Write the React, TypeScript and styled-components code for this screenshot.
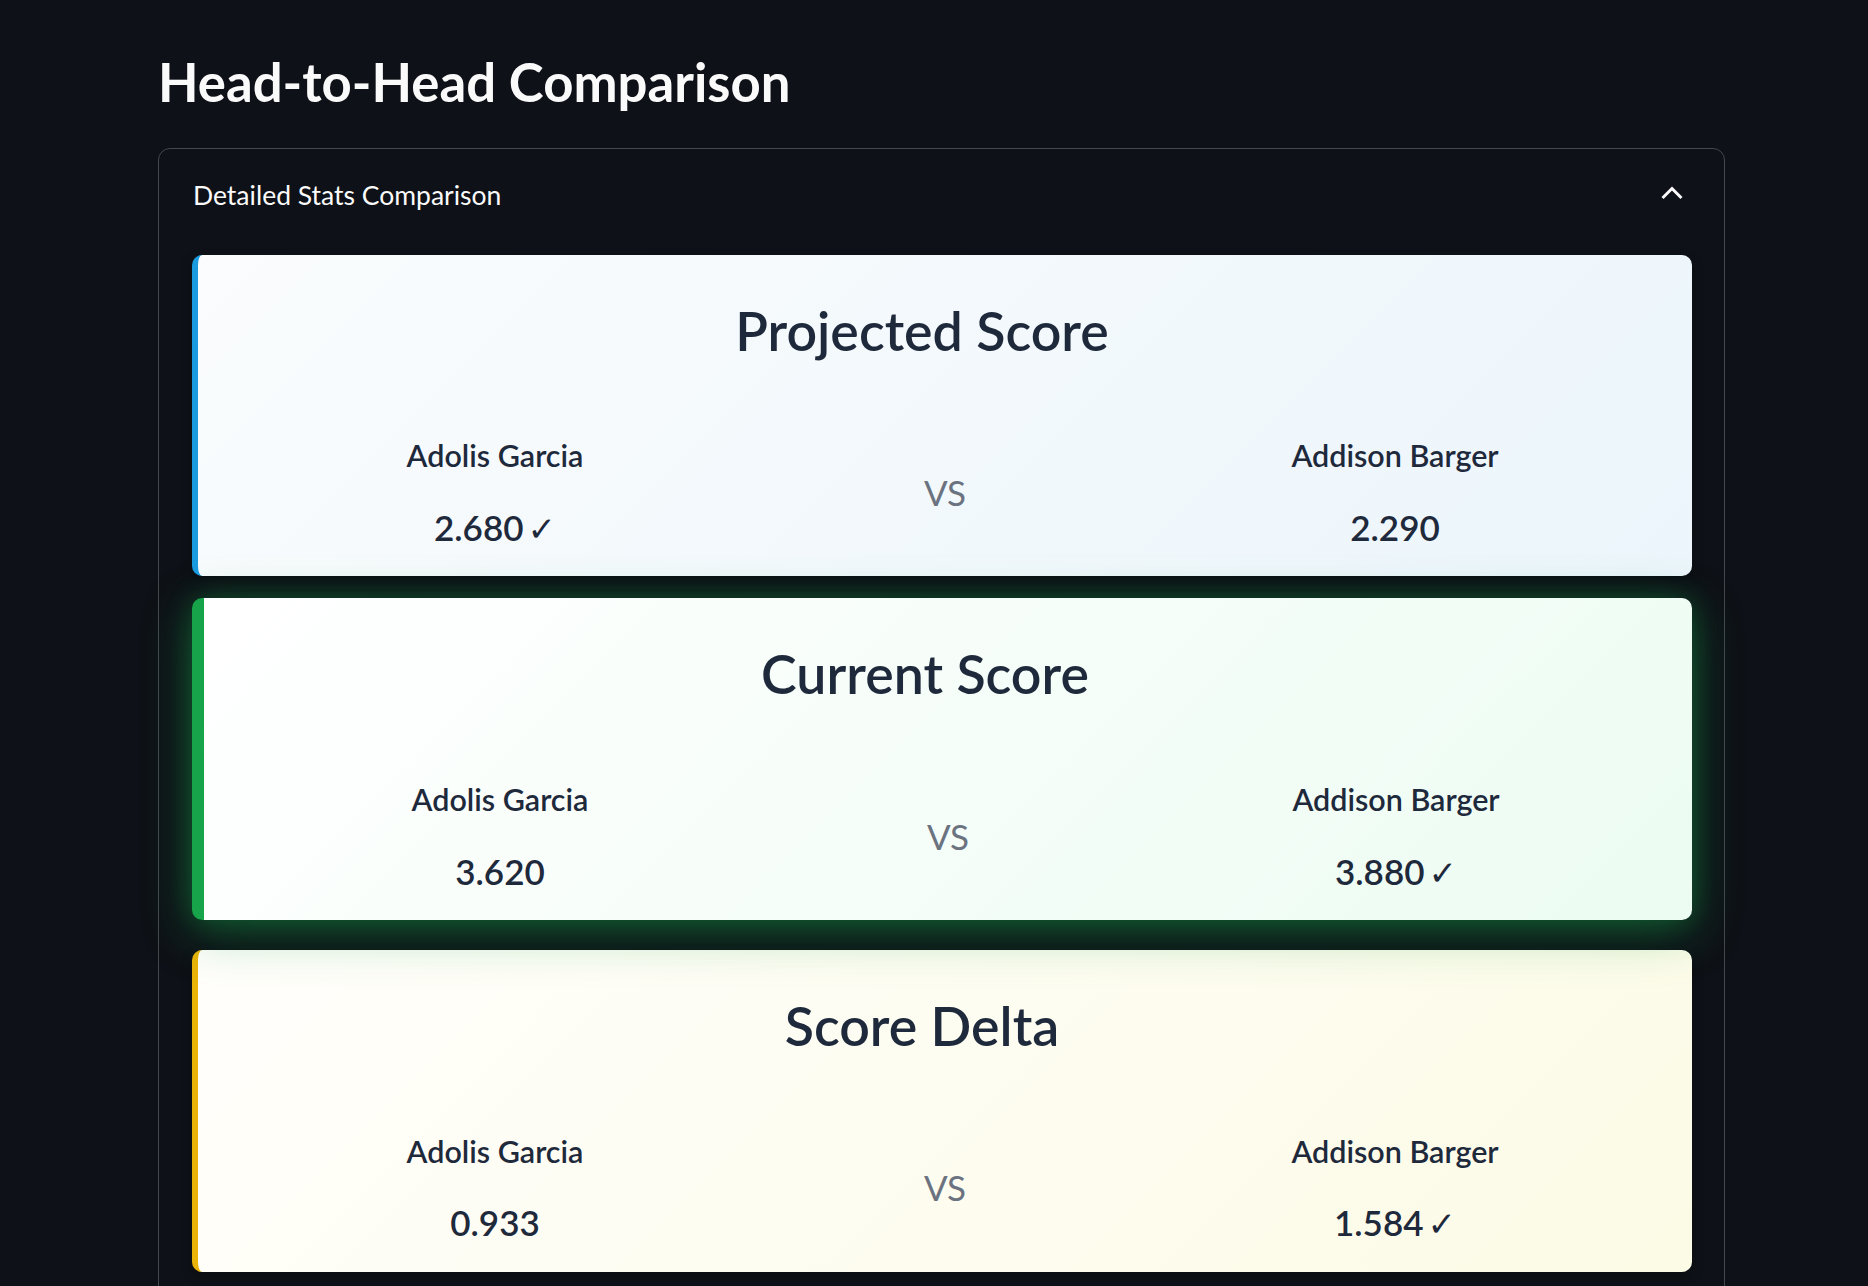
import React from "react";
import styled, { createGlobalStyle, css } from "styled-components";

const GlobalStyle = createGlobalStyle`
  html, body {
    margin: 0;
    padding: 0;
    background: #0e1117;
  }
  body {
    font-family: Lato, "Noto Sans", sans-serif;
    color: #fafafa;
    overflow: hidden;
  }
  * { box-sizing: border-box; }
`;

const Page = styled.main`
  min-height: 1286px;
  padding: 0 143px 0 158px;
`;

const Heading = styled.h2`
  margin: 0;
  padding: 50px 0 0;
  font-size: 52.7px;
  line-height: 1.2;
  font-weight: 700;
  color: #fafafa;
`;

const Expander = styled.section`
  margin-top: 34.5px;
  width: 1567px;
  border: 1px solid #44474d;
  border-radius: 12px;
`;

const Summary = styled.div`
  height: 92px;
  padding: 0 40px 0 34px;
  display: flex;
  align-items: center;
  justify-content: space-between;
  font-size: 26.5px;
  font-weight: 400;
  color: #fafafa;
`;

const Chevron = styled.svg`
  width: 24px;
  height: 16px;
  display: block;
  margin-top: -3px;
`;

const Body = styled.div`
  padding: 14px 32px 32px 33px;
  display: flex;
  flex-direction: column;
  gap: 26px;
`;

type Tone = "blue" | "green" | "yellow";

const tones: Record<Tone, { edge: string; bg: string; width: number }> = {
  blue: { edge: "#1a9be0", bg: "linear-gradient(135deg, #fafcfd 0%, #ebf5fb 100%)", width: 6 },
  green: { edge: "#16a34a", bg: "linear-gradient(135deg, #ffffff 0%, #ecfcf2 100%)", width: 12 },
  yellow: { edge: "#eab308", bg: "linear-gradient(135deg, #fffefb 0%, #fcfbe6 100%)", width: 6 },
};

const Card = styled.article<{ $tone: Tone; $raised?: boolean }>`
  background: ${(p) => tones[p.$tone].bg};
  border-left: ${(p) => tones[p.$tone].width}px solid ${(p) => tones[p.$tone].edge};
  border-radius: 10px;
  padding: 44px 72px 30px;
  color: #1e293b;
  box-shadow: 0 4px 12px rgba(0, 0, 0, 0.25);
  ${(p) =>
    p.$raised &&
    css`
      transform: translateY(-4px);
      box-shadow: 0 12px 50px rgba(22, 163, 74, 0.42), 0 0 26px rgba(22, 163, 74, 0.28);
    `}
`;

const CardTitle = styled.h3`
  margin: 0 0 75px;
  padding-right: 46px;
  text-align: center;
  font-size: 53.7px;
  line-height: 1.185;
  font-weight: 600;
  color: #1e293b;
`;

const Versus = styled.div`
  display: grid;
  grid-template-columns: 1fr 1fr 1fr;
  align-items: center;
`;

const Side = styled.div`
  display: flex;
  flex-direction: column;
  align-items: center;
  gap: 34px;
`;

const Name = styled.div`
  font-size: 30.5px;
  line-height: 1.2;
  font-weight: 600;
  color: #1e293b;
`;

const Value = styled.div`
  font-size: 35px;
  line-height: 1.1;
  font-weight: 600;
  color: #1e293b;
  white-space: nowrap;
`;

const Check = styled.span`
  font-family: "DejaVu Sans", sans-serif;
  font-weight: 400;
  font-size: 34px;
  line-height: 1;
  margin-left: 4px;
`;

const Vs = styled.div`
  text-align: center;
  font-size: 35px;
  line-height: 1.2;
  font-weight: 400;
  color: #6b7280;
`;

type Stat = {
  title: string;
  tone: Tone;
  raised?: boolean;
  a: string;
  b: string;
  winner: "a" | "b";
};

const stats: Stat[] = [
  { title: "Projected Score", tone: "blue", a: "2.680", b: "2.290", winner: "a" },
  { title: "Current Score", tone: "green", raised: true, a: "3.620", b: "3.880", winner: "b" },
  { title: "Score Delta", tone: "yellow", a: "0.933", b: "1.584", winner: "b" },
];

export default function App() {
  return (
    <>
      <GlobalStyle />
      <Page>
        <Heading>Head-to-Head Comparison</Heading>
        <Expander>
          <Summary>
            <span>Detailed Stats Comparison</span>
            <Chevron viewBox="0 0 24 16" fill="none">
              <polyline points="2.5,13 12,3.5 21.5,13" stroke="#fafafa" strokeWidth="3" strokeLinejoin="miter" />
            </Chevron>
          </Summary>
          <Body>
            {stats.map((s) => (
              <Card key={s.title} $tone={s.tone} $raised={s.raised}>
                <CardTitle>{s.title}</CardTitle>
                <Versus>
                  <Side>
                    <Name>Adolis Garcia</Name>
                    <Value>
                      {s.a}
                      {s.winner === "a" && <Check>✓</Check>}
                    </Value>
                  </Side>
                  <Vs>VS</Vs>
                  <Side>
                    <Name>Addison Barger</Name>
                    <Value>
                      {s.b}
                      {s.winner === "b" && <Check>✓</Check>}
                    </Value>
                  </Side>
                </Versus>
              </Card>
            ))}
          </Body>
        </Expander>
      </Page>
    </>
  );
}
